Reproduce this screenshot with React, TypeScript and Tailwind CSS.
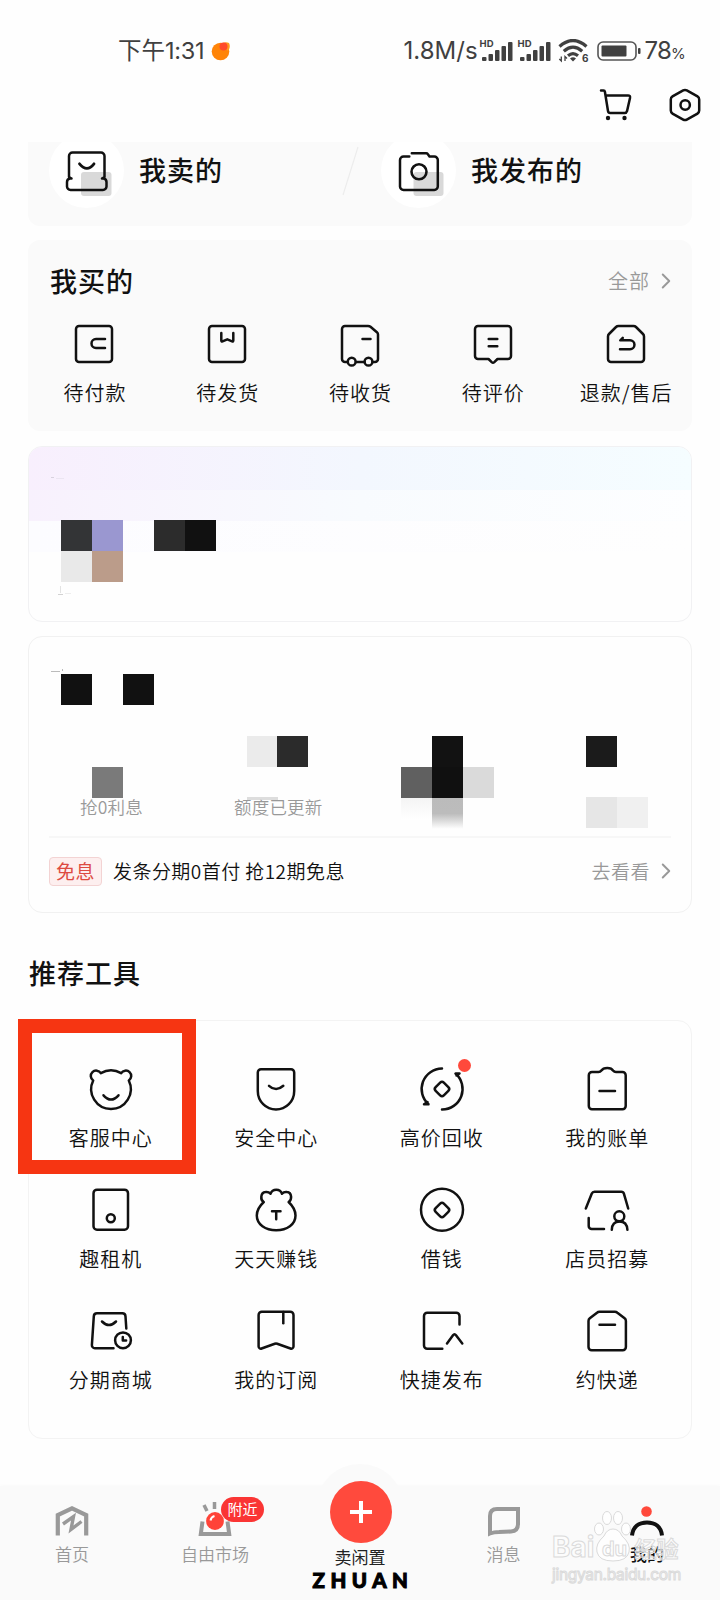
import React from 'react';
import { ChevronRight } from 'lucide-react';

interface IconProps {
  size?: number;
  children: React.ReactNode;
}

const LineIcon: React.FC<IconProps> = ({ size = 48, children }) => (
  <svg
    width={size}
    height={size}
    viewBox={`0 0 ${size} ${size}`}
    fill="none"
    stroke="#111"
    strokeWidth={2.5}
    strokeLinecap="round"
    strokeLinejoin="round"
    className="shrink-0 overflow-visible"
  >
    {children}
  </svg>
);

interface Entry {
  label: string;
  icon: React.ReactNode;
  dot?: boolean;
}

const orders: Entry[] = [
  {
    label: '待付款',
    icon: (
      <>
        <rect x="4" y="4" width="36" height="36" rx="3" />
        <path d="M33 17H24a4.5 4.5 0 0 0 0 9H33" />
      </>
    ),
  },
  {
    label: '待发货',
    icon: (
      <>
        <rect x="4" y="4" width="36" height="36" rx="3" />
        <path d="M16.3 11v7.6q0 1.2 1.2.8L22.3 17.300l4.800 2.100q1.200.4 1.200-.8V11" />
      </>
    ),
  },
  {
    label: '待收货',
    icon: (
      <>
        <path d="M9.500 40H7a3 3 0 0 1-3-3V7a3 3 0 0 1 3-3h23q1.500 0 2.500.8l6.400 5.400q1.100 1 1.100 2.400V37a3 3 0 0 1-3 3h-2.500M18 40h8.500" />
        <circle cx="13.700" cy="39.700" r="3.900" />
        <circle cx="30.500" cy="39.700" r="3.900" />
        <path d="M24.500 17h8" />
      </>
    ),
  },
  {
    label: '待评价',
    icon: (
      <>
        <path d="M7 4h30a3 3 0 0 1 3 3v27a3 3 0 0 1-3 3H26.500l-3.200 3.200q-1.300 1.200-2.600 0L17.500 37H7a3 3 0 0 1-3-3V7a3 3 0 0 1 3-3z" />
        <path d="M17.700 17h8.600M17.700 24.300h8.600" />
      </>
    ),
  },
  {
    label: '退款/售后',
    icon: (
      <>
        <path d="M14.500 4h15q1.500 0 2.500 1l7 7q1 1 1 2.500V37a3 3 0 0 1-3 3H7a3 3 0 0 1-3-3V14.500Q4 13 5 12l7-7q1-1 2.500-1z" />
        <path d="M18.800 15.800L16.300 18.300H26a4.400 4.400 0 0 1 0 8.900H16" />
      </>
    ),
  },
];

const tools: Entry[] = [
  {
    label: '客服中心',
    icon: (
      <>
        <path d="M6.200 15.500A5.400 5.400 0 1 1 13.800 8.200A20 20 0 0 1 34.200 8.200A5.400 5.400 0 1 1 41.800 15.500A19.800 19.800 0 1 1 6.200 15.500z" />
        <path d="M16.500 30.300q7.500 8.500 15 0" />
      </>
    ),
  },
  {
    label: '安全中心',
    icon: (
      <>
        <path d="M9 4.300h30a3.200 3.200 0 0 1 3.200 3.200V26C42.200 36.500 34 44.500 24 44.500S5.800 36.500 5.800 26V7.500A3.200 3.200 0 0 1 9 4.300z" />
        <path d="M17 20.800q7 6.500 14.300 0" />
      </>
    ),
  },
  {
    label: '高价回收',
    dot: true,
    icon: (
      <>
        <path d="M24 3.500A20.500 20.500 0 0 0 10.500 39.300H6L9.500 37" />
        <path d="M24 44.500A20.500 20.500 0 0 0 37.500 8.500H41.500L38.500 10.500" />
        <rect x="18.200" y="18.200" width="11.600" height="11.600" rx="2.600" transform="rotate(45 24 24)" />
      </>
    ),
  },
  {
    label: '我的账单',
    icon: (
      <>
        <path d="M9 7h6.500q1.800 0 2.600-1.200Q20 3 24.300 3t6 2.800Q31.200 7 33 7h6.500A3.200 3.200 0 0 1 42.700 10.200V41a3.200 3.200 0 0 1-3.200 3.200H9A3.200 3.200 0 0 1 5.800 41V10.200A3.200 3.200 0 0 1 9 7z" />
        <path d="M16.500 26h15.500" />
      </>
    ),
  },
  {
    label: '趣租机',
    icon: (
      <>
        <rect x="6.500" y="3.700" width="34.500" height="40" rx="3.500" />
        <circle cx="23.800" cy="32.300" r="4" />
      </>
    ),
  },
  {
    label: '天天赚钱',
    icon: (
      <>
        <path d="M11.800 16C8 14 8.500 6.500 13.500 6Q16.500 5.500 18.500 7.800Q20 3.800 24.300 3.800T30 7.800Q32 5.500 35 6C40 6.500 40.300 14 36.600 16Q43.500 22.500 43.500 29.500C43.500 38.500 35 44.200 24.200 44.200S4.800 38.500 4.800 29.500Q4.800 22.500 11.800 16z" />
        <path d="M20 25.300h8.500M24.200 25.300v8" />
      </>
    ),
  },
  {
    label: '借钱',
    icon: (
      <>
        <circle cx="24" cy="23.700" r="21" />
        <rect x="18.200" y="18.200" width="11.600" height="11.600" rx="2.600" transform="rotate(45 24 24)" />
      </>
    ),
  },
  {
    label: '店员招募',
    icon: (
      <>
        <path d="M2.800 22.500L8.800 7.500q.8-1.800 2.700-1.800h26.800q2 0 2.600 1.900L45.200 22.500" />
        <path d="M5.700 32v8a3 3 0 0 0 3 3H21" />
        <circle cx="36.300" cy="30.300" r="5" />
        <path d="M28.800 43.800C29 38 32 35.500 36.500 35.500s7.600 2.500 7.900 8.300" />
      </>
    ),
  },
  {
    label: '分期商城',
    icon: (
      <>
        <path d="M39.300 21.500L38.500 9.300a3.200 3.200 0 0 0-3.200-3H10a3.200 3.200 0 0 0-3.200 3L4.900 37.800A3 3 0 0 0 8 41.200H26.500" />
        <path d="M15 14.500q7 7 14 0" />
        <circle cx="36" cy="33.300" r="7.900" />
        <path d="M35.800 30v3.600h3.300" />
      </>
    ),
  },
  {
    label: '我的订阅',
    icon: (
      <>
        <path d="M9.800 4.700h28.500a3.200 3.200 0 0 1 3.200 3.200V39.500a2.200 2.200 0 0 1-3 2L25.200 36.800q-1.200-.4-2.400 0L9.600 41.500a2.200 2.200 0 0 1-3-2V7.900A3.200 3.200 0 0 1 9.800 4.700z" />
        <path d="M31.300 5v11.300" />
      </>
    ),
  },
  {
    label: '快捷发布',
    icon: (
      <>
        <path d="M41.500 17.500V8.900A3.200 3.200 0 0 0 38.300 5.700H9.200A3.200 3.200 0 0 0 6 8.900V38.500a3.200 3.200 0 0 0 3.200 3.200H24.300" />
        <path d="M29 36.500l6-8.200q1.500-2 3 0l6.300 8.200" />
      </>
    ),
  },
  {
    label: '约快递',
    icon: (
      <>
        <path d="M16.500 4.800h15.300q1.500 0 2.600.9l7.200 5.600q1.300 1 1.300 2.700V40a3.200 3.200 0 0 1-3.200 3.200H8.700A3.200 3.200 0 0 1 5.500 40V14q0-1.700 1.300-2.700L14 5.700q1-.9 2.500-.9z" />
        <path d="M16.500 17.700h15.500" />
      </>
    ),
  },
];

// x, y, colour of each 31px mosaic tile, relative to its card
type Tile = [number, number, string];

const profileTiles: Tile[] = [
  [33, 74, '#333436'],
  [64, 74, '#9a97d0'],
  [126, 74, '#2c2c2c'],
  [157, 74, '#111111'],
  [33, 105, '#e9e9e9'],
  [64, 105, '#bb9c8a'],
];

const walletTiles: Tile[] = [
  [33, 38, '#111111'],
  [95, 38, '#111111'],
  [219, 100, '#ebebeb'],
  [249, 100, '#2b2b2b'],
  [404, 100, '#121212'],
  [558, 100, '#1b1b1b'],
  [64, 131, '#7a7a7a'],
  [373, 131, '#606060'],
  [404, 131, '#101010'],
  [435, 131, '#dadada'],
  [558, 161, '#e6e6e6'],
  [589, 161, '#f0f0f0'],
];

const Mosaic: React.FC<{ tiles: Tile[] }> = ({ tiles }) => (
  <>
    {tiles.map(([x, y, color]) => (
      <span
        key={`${x}-${y}`}
        className="absolute size-[31px]"
        style={{ left: x - 1, top: y - 1, backgroundColor: color }}
      />
    ))}
  </>
);

const Signal = () => (
  <div className="relative h-[22px] w-[32px]">
    <span className="absolute -left-px top-0 font-[Inter] text-[9.500px] font-bold leading-[8px]">HD</span>
    <svg width="32" height="22" viewBox="0 0 32 22" fill="#404040">
      <rect x="1" y="17" width="4.500" height="4" rx="1" />
      <rect x="7.500" y="14" width="4.500" height="7" rx="1" />
      <rect x="14" y="10" width="4.500" height="11" rx="1" />
      <rect x="20.500" y="6" width="4.500" height="15" rx="1" />
      <rect x="27" y="2" width="4.500" height="19" rx="1" />
    </svg>
  </div>
);

const StatusBar = () => (
  <div className="flex h-[76px] items-center pl-[118px] pr-[35px] pt-[25px] text-[#404040]">
    <span className="text-[23.500px] leading-none">
      下午<span className="font-[Inter] tracking-[-0.300px]">1:31</span>
    </span>
    <svg width="20" height="20" viewBox="0 0 20 20" className="ml-[7px]">
      <circle cx="9.500" cy="10.500" r="8.800" fill="#ff8408" />
      <path d="M10 3q4-3 8-1 2 4-1 8z" fill="#ff9a1e" />
      <circle cx="12.500" cy="5.500" r="4" fill="#ff4a2b" />
    </svg>
    <div className="ml-auto flex items-center">
      <span className="w-[77px] font-[Inter] text-[24px] leading-none">1.8M/s</span>
      <Signal />
      <div className="w-[6px]" />
      <Signal />
      <svg width="32" height="24" viewBox="0 0 32 24" fill="none" stroke="#404040" strokeWidth="3.200" className="ml-[7px]">
        <path d="M1.500 7.500q13.500-12 27 0M5.800 12.200q9.200-8 18.400 0M10 16.700q5-4.200 10 0" />
        <path d="M15 22.500l-3-3q3-2.500 6 0z" fill="#404040" stroke="none" />
        <path d="M3.300 17.500v4.500l-2-2M7 22v-4.500l2 2" strokeWidth="1.300" />
        <text x="24" y="22.500" fontSize="10" fontFamily="Inter" fontWeight="700" fill="#404040" stroke="none">6</text>
      </svg>
      <svg width="44" height="20" viewBox="0 0 44 20" fill="none" className="ml-[7px]">
        <rect x="1" y="1" width="38" height="18" rx="5" stroke="#555" strokeWidth="1.600" />
        <rect x="4.500" y="4.500" width="25" height="11" rx="1" fill="#404040" />
        <rect x="41" y="7" width="2.500" height="6" rx="1" fill="#404040" />
      </svg>
      <span className="ml-[4px] font-[Inter] text-[24px] leading-none tracking-[-0.800px]">
        78<span className="text-[15px]">%</span>
      </span>
    </div>
  </div>
);

const TopActions = () => (
  <div className="flex h-[66px] items-start justify-end gap-[36px] pr-[19px] pt-[12px]">
    <svg width="34" height="34" viewBox="0 0 34 34" fill="none" stroke="#111" strokeWidth="2.500" strokeLinecap="round" strokeLinejoin="round">
      <path d="M2 2.500h2.500q1.200 0 1.400 1.200L9 23q.3 2 2.200 2h14.500q1.800 0 2.300-1.800L31 10q.5-2.600-2-2.600H7" />
      <circle cx="9" cy="30" r="2.200" fill="#111" stroke="none" />
      <circle cx="25.500" cy="30" r="2.200" fill="#111" stroke="none" />
    </svg>
    <svg width="32" height="34" viewBox="0 0 32 34" fill="none" stroke="#111" strokeWidth="2.500" strokeLinejoin="round">
      <path d="M14.200 2.400q1.800-1 3.600 0l10.700 6q1.700 1 1.700 3v11.200q0 2-1.700 3l-10.700 6q-1.800 1-3.600 0l-10.700-6q-1.700-1-1.700-3V11.400q0-2 1.700-3z" />
      <circle cx="16.200" cy="17" r="4.700" />
    </svg>
  </div>
);

const SellPanel = () => (
  <section className="mx-[28px] flex h-[84px] overflow-hidden rounded-b-[12px] bg-[#fafafa]">
    <div className="flex flex-1 pl-[21px]">
      <div className="-mt-[9px] flex size-[75px] items-center justify-center rounded-full bg-white">
        <LineIcon>
          <rect x="18" y="25" width="30.500" height="24" rx="3" fill="#d9d9d9" stroke="none" />
          <path d="M9 31.500L6.500 30V9a3.500 3.500 0 0 1 3.500-3.500h28.500A3.500 3.500 0 0 1 42 9v21l-2.500 1.500M9 31.500H7.500Q4.500 32 4.500 35v4.500A3.500 3.500 0 0 0 8 43h32.500a3.500 3.500 0 0 0 3.500-3.500V35q0-3-3-3.500H39.500" transform="translate(-0.500 0)" />
          <path d="M16.500 16.800q7.500 9 14.500 0" strokeWidth="2.800" />
        </LineIcon>
      </div>
      <span className="ml-[15px] mt-[8px] text-[27px] font-medium leading-[40px] tracking-[1px] text-[#111]">我卖的</span>
    </div>
    <svg width="18" height="52" viewBox="0 0 18 52" className="mr-[22px] mt-[3px]">
      <path d="M17 2L2 50" stroke="#ececec" strokeWidth="1.200" />
    </svg>
    <div className="flex w-[311px]">
      <div className="-mt-[9px] flex size-[75px] items-center justify-center rounded-full bg-white">
        <LineIcon>
          <rect x="18.500" y="25" width="30" height="24" rx="3" fill="#d9d9d9" stroke="none" />
          <path d="M14.300 9.500H8.500A3.500 3.500 0 0 0 5 13v26.500A3.500 3.500 0 0 0 8.500 43h30.800a3.500 3.500 0 0 0 3.500-3.500V13a3.500 3.500 0 0 0-3.500-3.500H34.500L32.700 7q-.5-.8-1.500-.8H16.800" />
          <circle cx="24" cy="24.800" r="7.500" strokeWidth="2.600" />
        </LineIcon>
      </div>
      <span className="ml-[15px] mt-[8px] text-[27px] font-medium leading-[40px] tracking-[1px] text-[#111]">我发布的</span>
    </div>
  </section>
);

const BoughtPanel = () => (
  <section className="mx-[28px] mt-[14px] h-[191px] rounded-[12px] bg-[#fafafa] pt-[21px]">
    <div className="flex h-[40px] items-center justify-between pl-[22px] pr-[13px]">
      <h2 className="text-[27px] font-medium tracking-[1px] text-[#111]">我买的</h2>
      <span className="flex items-center text-[20px] font-[350] tracking-[1px] text-[#999]">
        全部
        <ChevronRight size={26} strokeWidth={1.800} className="ml-[3px]" />
      </span>
    </div>
    <div className="mt-[21px] flex justify-between">
      {orders.map((o) => (
        <div key={o.label} className="flex w-[132.800px] flex-col items-center">
          <LineIcon size={44}>{o.icon}</LineIcon>
          <span className="ml-px mt-[13px] text-[20px] font-[350] leading-[28px] tracking-[1px] text-[#111]">{o.label}</span>
        </div>
      ))}
    </div>
  </section>
);

const ProfileCard = () => (
  <section className="relative mx-[28px] mt-[15px] h-[176px] overflow-hidden rounded-[14px] border border-[#f1f1f3]">
    <div className="h-[43px] bg-linear-to-r from-[#f8effd] via-[#f3f7fe] to-[#f5fdff]" />
    <div className="h-[31px] bg-linear-to-r from-[#f8f1fd] via-[#f8fbfe] to-[#fdfeff]" />
    <div className="h-[31px] bg-linear-to-r from-[#fcfcff] to-[#fefefe]" />
    <Mosaic tiles={profileTiles} />
    <span className="absolute left-[29px] top-[147px] h-px w-[5px] bg-[#d2d2d2]" />
    <span className="absolute left-[31px] top-[139px] h-[7px] w-px bg-[#e3e3e3]" />
    <span className="absolute left-[36px] top-[146px] h-px w-[6px] bg-[#ededed]" />
    <span className="absolute left-[22px] top-[30px] h-px w-[3px] bg-[#d8d2de]" />
    <span className="absolute left-[27px] top-[31px] h-px w-[8px] bg-[#ebe5f1]" />
  </section>
);

const WalletCard = () => (
  <section className="relative mx-[28px] mt-[14px] h-[277px] rounded-[14px] border border-[#f1f1f1] px-[20px]">
    <div className="flex h-[201px] items-end border-b-2 border-[#f7f7f7] pb-[16px] text-[17.500px] font-[350] leading-[26px] tracking-[0.200px] text-[#999]">
      <span className="ml-[31px] w-[154px]">抢0利息</span>
      <span>额度已更新</span>
    </div>
    <Mosaic tiles={walletTiles} />
    <span className="absolute left-[22px] top-[34px] h-px w-[9px] bg-[#bbb]" />
    <span className="absolute left-[33px] top-[32px] h-[2px] w-px bg-[#bbb]" />
    <span className="absolute left-[218px] top-[160px] h-[3px] w-[31px] bg-[#d5d5d5]/80" />
    <span className="absolute left-[372px] top-[161px] h-[22px] w-[31px] bg-linear-to-b from-[#f4f4f4] to-white" />
    <span className="absolute left-[403px] top-[161px] h-[31px] w-[31px] bg-linear-to-b from-[#bbb] via-[#bcbcbc] to-white" />
    <div className="flex h-[66px] items-center">
      <span className="flex h-[29px] w-[53px] items-center justify-center rounded-[4px] border border-[#f3d3d3] bg-[#fdefef] text-[19px] tracking-[0.500px] text-[#dd4b42]">
        免息
      </span>
      <span className="ml-[11px] text-[19px] font-[350] tracking-[0.450px] text-[#111]">发条分期0首付 抢12期免息</span>
      <span className="-mr-[8px] ml-auto flex items-center text-[19px] font-[350] tracking-[0.500px] text-[#999]">
        去看看
        <ChevronRight size={26} strokeWidth={1.800} className="ml-[3px]" />
      </span>
    </div>
  </section>
);

const ToolsCard = () => (
  <section className="mx-[28px] mt-[27px] h-[419px] rounded-[14px] border border-[#f3f3f3] pr-px pt-[44px]">
    <div className="-ml-px grid grid-cols-4 gap-y-[43px]">
      {tools.map((t, i) => (
        <div key={t.label} className="relative flex h-[78px] flex-col items-center">
          <div className="relative">
            <LineIcon>{t.icon}</LineIcon>
            {t.dot && <span className="absolute -right-[5px] -top-[6px] size-[13px] rounded-full bg-[#ff493b]" />}
          </div>
          <span className="mt-[11px] text-[20px] font-[350] leading-[28px] tracking-[1px] text-[#111]">{t.label}</span>
          {i === 0 && (
            <span className="absolute -left-[10px] -top-[46px] h-[155px] w-[178px] border-[14px] border-[#f63512]" />
          )}
        </div>
      ))}
    </div>
  </section>
);

const BottomNav = () => (
  <nav className="relative mt-auto grid h-[114px] shrink-0 grid-cols-5 bg-[#fafafa] shadow-[0_-1px_3px_rgba(0,0,0,0.02)]">
    <div className="flex flex-col items-center pt-[19px]">
      <svg width="34" height="32" viewBox="0 0 34 32" fill="none" stroke="#999" strokeWidth="4.200">
        <path d="M2.800 30.500V10L17 3.300 31.200 10V30.500" />
        <path d="M8 19L18.500 11.500L16 24.500L26.500 16.500" strokeWidth="3.400" />
      </svg>
      <span className="mt-[4px] text-[17px] font-[350] leading-[26px] text-[#999]">首页</span>
    </div>
    <div className="relative flex flex-col items-center pr-[2px] pt-[15px]">
      <svg width="34" height="36" viewBox="0 0 34 36" fill="none" stroke="#999">
        <path d="M4.500 20.500L2.800 33h28.400L29.500 20.500" strokeWidth="4" />
        <path d="M6 4l3 6M16.500 1v7" strokeWidth="3.500" />
        <circle cx="17" cy="20" r="8.900" fill="#ff4338" stroke="none" />
        <path d="M12.500 19.500q.5-3.500 4-4.500" stroke="#fff" strokeWidth="2" />
      </svg>
      <span className="absolute left-[77px] top-[11px] flex h-[25px] w-[43px] items-center justify-center rounded-full bg-[#fa3534] text-[15px] text-white">
        附近
      </span>
      <span className="mt-[4px] text-[17px] font-[350] leading-[26px] text-[#999]">自由市场</span>
    </div>
    <div className="relative flex flex-col items-center">
      <span className="absolute -top-[22px] left-[28px] h-[88px] w-[88px] rounded-full bg-[#fafafa]" />
      <span className="relative -mt-[5px] ml-px flex size-[62px] shrink-0 items-center justify-center rounded-full bg-[#ff4a3d]">
        <svg width="22" height="22" viewBox="0 0 22 22" stroke="#fff" strokeWidth="4">
          <path d="M11 0v22M0 11h22" />
        </svg>
      </span>
      <span className="relative mt-[1px] text-[17px] leading-[26px] text-[#222]">卖闲置</span>
      <span className="relative pl-[6px] font-[Lato] text-[20.500px] font-black leading-[20px] tracking-[5.500px] text-black [-webkit-text-stroke:1px_#000]">
        ZHUAN
      </span>
    </div>
    <div className="flex flex-col items-center pr-px pt-[19px]">
      <svg width="34" height="32" viewBox="0 0 34 32" fill="none" stroke="#999" strokeWidth="4">
        <path d="M3 28.500V11Q3 4 10 4H31V19q0 7-7 7.500L12 27q-5 0-9 1.500z" />
      </svg>
      <span className="mt-[4px] text-[17px] font-[350] leading-[26px] text-[#999]">消息</span>
    </div>
    <div className="flex flex-col items-center pr-[2px] pt-[19px]">
      <svg width="34" height="32" viewBox="0 0 34 32" fill="none">
        <circle cx="16.500" cy="6.500" r="5.300" fill="#ff493b" />
        <path d="M2 30.500C3 21.500 9 17.500 17 17.500S31 21.500 32 30.500" stroke="#111" strokeWidth="4" />
      </svg>
      <span className="mt-[4px] text-[17px] font-medium leading-[26px] text-[#111]">我的</span>
    </div>
  </nav>
);

const Watermark = () => (
  <div className="absolute bottom-[14px] left-[552px] flex w-[132px] flex-col text-white/60 [-webkit-text-stroke:1px_#dadada]">
    <div className="relative flex h-[34px] items-center font-[Inter] text-[28px] font-bold leading-[34px]">
      <span>Bai</span>
      <svg width="38" height="54" viewBox="0 0 38 54" className="-mt-[20px]" fill="#fff" fillOpacity="0.750" stroke="#dadada">
        <ellipse cx="5" cy="19" rx="4.500" ry="6" />
        <ellipse cx="13" cy="8" rx="4.500" ry="6.500" />
        <ellipse cx="24" cy="8" rx="4.500" ry="6.500" />
        <ellipse cx="32" cy="19" rx="4.500" ry="6" />
        <path d="M19 19q6 0 9 7 9 8 7 16-2 9-16 9T3 42q-2-8 7-16 3-7 9-7z" />
        <text x="8" y="46" fontSize="20" fontFamily="Inter" fontWeight="700">du</text>
      </svg>
      <span className="ml-[2px] font-['Noto_Sans_CJK_SC'] text-[22px]">经验</span>
    </div>
    <span className="font-[Inter] text-[15.500px] leading-[22px] tracking-[-0.300px]">jingyan.baidu.com</span>
  </div>
);

const App: React.FC = () => {
  return (
    <div className="relative flex h-[1600px] w-[720px] flex-col overflow-hidden bg-[#fefefe] font-['Noto_Sans_CJK_SC',sans-serif]">
      <StatusBar />
      <TopActions />
      <SellPanel />
      <BoughtPanel />
      <ProfileCard />
      <WalletCard />
      <h2 className="ml-[29px] mt-[40px] text-[27px] font-medium leading-[40px] tracking-[1px] text-[#111]">推荐工具</h2>
      <ToolsCard />
      <BottomNav />
      <Watermark />
    </div>
  );
};

export default App;
